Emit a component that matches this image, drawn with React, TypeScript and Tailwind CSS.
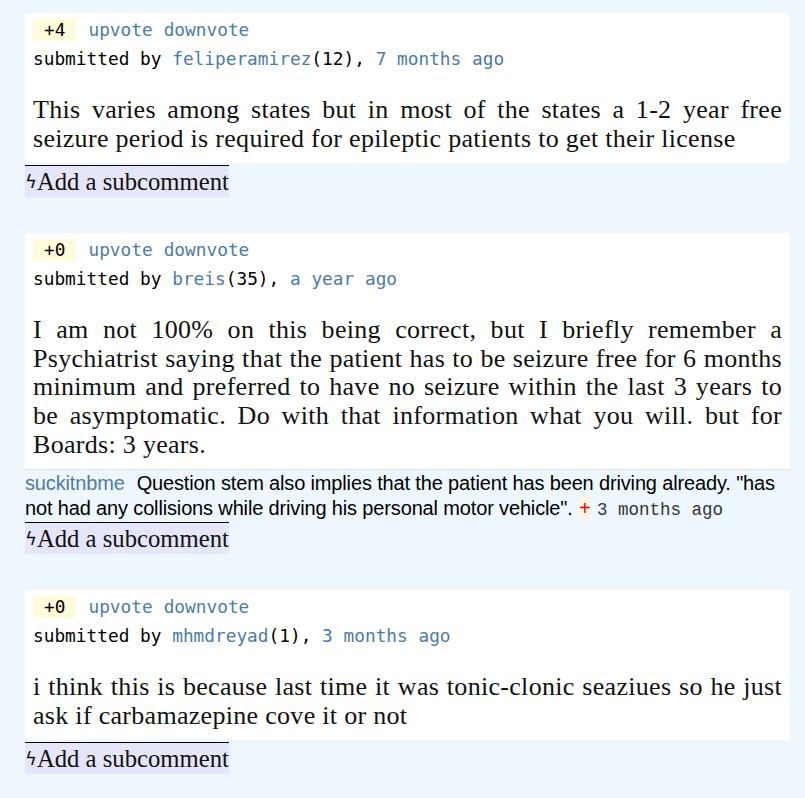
import React from 'react';

type Sub = { user: string; text: string; when: string };

type Comment = {
  score: string;
  user: string;
  karma: number;
  when: string;
  body: string;
  subs?: Sub[];
};

const comments: Comment[] = [
  {
    score: '+4',
    user: 'feliperamirez',
    karma: 12,
    when: '7 months ago',
    body: 'This varies among states but in most of the states a 1-2 year free seizure period is required for epileptic patients to get their license',
  },
  {
    score: '+0',
    user: 'breis',
    karma: 35,
    when: 'a year ago',
    body: 'I am not 100% on this being correct, but I briefly remember a Psychiatrist saying that the patient has to be seizure free for 6 months minimum and preferred to have no seizure within the last 3 years to be asymptomatic. Do with that information what you will. but for Boards: 3 years.',
    subs: [
      {
        user: 'suckitnbme',
        text: 'Question stem also implies that the patient has been driving already. "has not had any collisions while driving his personal motor vehicle".',
        when: '3 months ago',
      },
    ],
  },
  {
    score: '+0',
    user: 'mhmdreyad',
    karma: 1,
    when: '3 months ago',
    body: 'i think this is because last time it was tonic-clonic seaziues so he just ask if carbamazepine cove it or not',
  },
];

const mono = "font-['DejaVu_Sans_Mono',monospace]";
const serif = "font-['Liberation_Serif',serif]";

function CommentBlock({ c }: { c: Comment }) {
  return (
    <div className="mb-[36px]">
      <div className="bg-white px-2 pt-[2px] pb-[10px]">
        <div className={`${mono} text-[17.8px] leading-[29px] text-black`}>
          <div className="flex items-center">
            <span className="bg-[#fffbdb] px-[11px] leading-[22px]">{c.score}</span>
            <span className="ml-[12px] text-[#4d7ba8]">upvote</span>
            <span className="ml-[11px] text-[#4d7ba8]">downvote</span>
          </div>
          <div>
            submitted by <span className="text-[#4d7ba8]">{c.user}</span>({c.karma}),{' '}
            <span className="text-[#4d7ba8]">{c.when}</span>
          </div>
        </div>
        <p className={`${serif} mt-[23px] text-justify text-[26px] leading-[28.6px] tracking-[0.3px] text-[#111]`}>
          {c.body}
        </p>
      </div>
      {c.subs ? (
        c.subs.map((s, i) => (
          <div
            key={i}
            className="border-t border-[#dfe6ee] py-[1px] font-['Liberation_Sans',Arial,sans-serif] text-[20px] leading-[25px] tracking-[-0.15px] text-black"
          >
            <span className="text-[#4d7ba8]">{s.user}</span>
            <span className="ml-[12px]">{s.text}</span>{' '}
            <span className="bg-[#fff3e6] px-[1px] leading-[20px] text-[#e00]">+</span>{' '}
            <span className="font-['Liberation_Mono',monospace] text-[17.5px] leading-[20px] tracking-normal text-[#333]">
              {s.when}
            </span>
          </div>
        ))
      ) : (
        <div className="h-[2px]" />
      )}
      <div
        className={`${serif} flex h-[32px] w-fit items-center whitespace-nowrap border-t border-black bg-[#e6e6fa] text-[24.7px] leading-[31px] text-[#111]`}
      >
        <span className="font-['DejaVu_Sans',sans-serif] text-[18px] leading-none">ϟ</span>
        <span>Add a subcomment</span>
      </div>
    </div>
  );
}

export default function App() {
  return (
    <div className="min-h-[798px] bg-[#eff7fe] pl-[25px] pr-[15px] pt-[13px]">
      {comments.map((c, i) => (
        <CommentBlock key={i} c={c} />
      ))}
    </div>
  );
}
